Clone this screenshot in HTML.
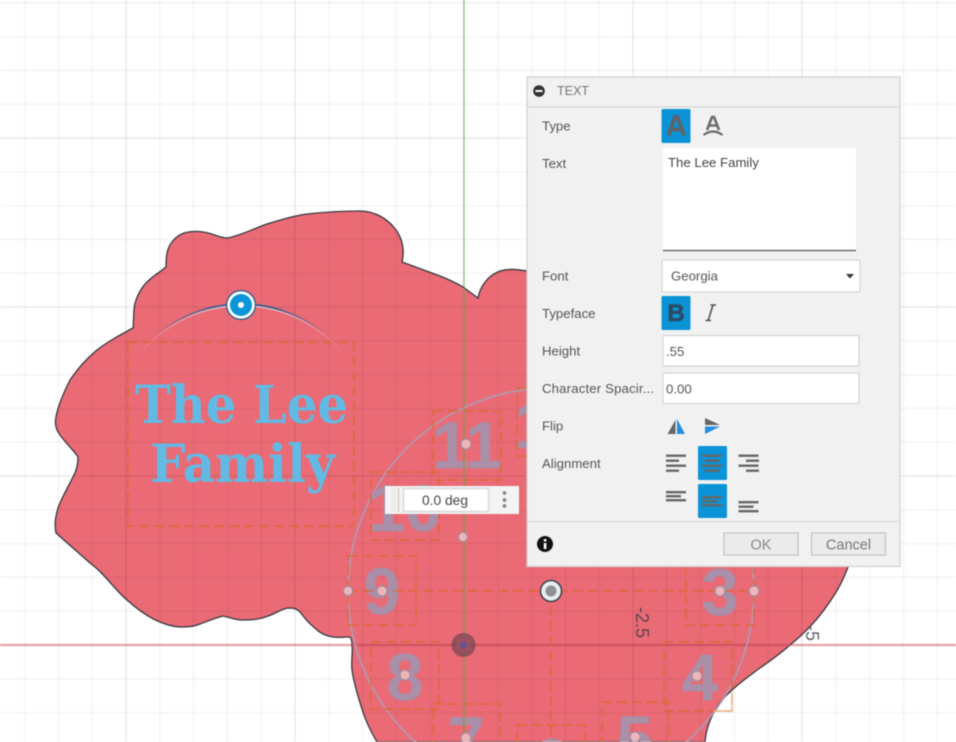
<!DOCTYPE html>
<html><head><meta charset="utf-8"><style>
html,body{margin:0;padding:0;background:#fff;width:956px;height:742px;overflow:hidden}
#r{position:relative;width:956px;height:742px;overflow:hidden;background:#fff}
svg{position:absolute;left:0;top:0;filter:blur(.5px);overflow:hidden}
text{font-family:"Liberation Sans",sans-serif}
.l{font-size:13.2px;fill:#555}
</style></head><body><div id="r">
<svg width="956" height="742" viewBox="0 0 956 742">
<defs>
<pattern id="g1" patternUnits="userSpaceOnUse" x="463.2" y="644.2" width="33.8" height="33.8"><rect width="1.6" height="33.8" fill="#000" fill-opacity=".04"/><rect width="33.8" height="1.6" fill="#000" fill-opacity=".04"/></pattern>
<pattern id="g2" patternUnits="userSpaceOnUse" x="463" y="644" width="169" height="169"><rect width="2" height="169" fill="#000" fill-opacity=".03"/><rect width="169" height="2" fill="#000" fill-opacity=".03"/></pattern>
<linearGradient id="arc" gradientUnits="userSpaceOnUse" x1="136" x2="347" y1="0" y2="0"><stop offset="0" stop-color="#fff" stop-opacity="0"/><stop offset=".5" stop-color="#efcfd8"/><stop offset="1" stop-color="#fff" stop-opacity="0"/></linearGradient>
<linearGradient id="arc2" gradientUnits="userSpaceOnUse" x1="136" x2="347" y1="0" y2="0"><stop offset=".08" stop-color="#17598c" stop-opacity="0"/><stop offset=".35" stop-color="#17598c" stop-opacity=".8"/><stop offset=".65" stop-color="#17598c" stop-opacity=".8"/><stop offset=".92" stop-color="#17598c" stop-opacity="0"/></linearGradient>
</defs>
<rect x="0" y="643.800" width="956" height="2.400" fill="#f5b0b5"/>
<rect x="463" y="0" width="1.800" height="300" fill="#a8e4a8"/>
<path fill="#ea6a75" stroke="#333a40" stroke-width="1.300" d="M360 211C375 211 388 219 396 230C402 238 405 250 402 262L440 276C450 280 458 284 463 287L478 298C480 287 487 276 500 271C510 268 520 270 527 271L848 567C844 578 838 590 831 600C820 617 805 633 790 645C780 654 770 661 760 668C749 676 738 684 730 692C723 698 720 702 717 707C710 718 706 730 705 742L377 742C370 730 366 722 363 712C358 697 354 684 352 670C351 660 353 652 352 646C352 640 351 637 349 637C344 637 338 638 333 637C326 636 320 633 316 629C308 623 304 617 300 612C296 608 292 608 288 608C281 609 275 614 268 616C258 620 250 620 240 620C233 619 228 617 223 616C215 618 208 621 200 624C193 627 186 627 180 627C165 626 148 619 127 600C115 590 105 574 90 563L56 533C54 523 56 515 58 508C62 497 68 487 73 477C77 470 78 463 78 457C72 448 62 440 57 430C55 425 55 421 56 417C58 405 64 392 70 380C78 368 86 359 97 350C107 342 120 335 133 328C134 320 133 312 135 303C138 293 142 287 147 282C153 276 160 272 166 267C166 262 166 258 167 253C169 243 176 236 184 233C191 231 197 231 203 232C212 233 220 238 227 238C240 236 255 228 267 224C280 220 293 216 307 214C325 212 342 211 360 211Z"/>
<rect x="352" y="643.800" width="438" height="2.400" fill="#dc5a66"/>
<rect width="956" height="742" fill="url(#g1)"/>
<rect width="956" height="742" fill="url(#g2)"/>
<rect x="0" y="2" width="956" height="1.500" fill="#000" fill-opacity=".025"/>

<circle cx="551" cy="591" r="203" fill="none" stroke="#b09bb5" stroke-width="2" stroke-opacity=".85"/>
<g fill="#a98fa8" stroke="#a98fa8" stroke-width=".5" font-size="66" text-anchor="middle">
<text x="467" y="468" font-weight="700">11</text>
<text x="405" y="531" font-weight="700">10</text>
<text x="382" y="614" font-weight="700">9</text>
<text x="405" y="700" font-weight="700">8</text>
<text x="466" y="763" font-weight="700">7</text>
<text x="551" y="785" font-weight="700">6</text>
<text x="635" y="762" font-weight="700">5</text>
<text x="700" y="700" font-weight="700">4</text>
<text x="720" y="615" font-weight="700">3</text>
<text x="551" y="448" font-weight="700">12</text>
</g>
<g fill="none" stroke="#d9682e" stroke-width="1.500" stroke-dasharray="10 5" stroke-opacity=".85">
<rect x="128" y="342" width="226" height="184"/>
<rect x="433" y="411" width="68" height="69"/>
<rect x="517" y="388" width="68" height="68"/>
<rect x="371" y="472" width="68" height="68"/>
<rect x="348" y="556" width="68" height="69"/>
<rect x="371" y="642" width="68" height="67"/>
<rect x="433" y="704" width="67" height="68"/>
<rect x="517" y="725" width="68" height="68"/>
<rect x="602" y="702" width="67" height="68"/>
<rect x="664" y="642" width="68" height="69"/>
<rect x="686" y="557" width="68" height="68"/>
<path d="M348 591H754M551 591V742"/>
</g>
<path d="M732 692V711H714" fill="none" stroke="#eeb98f" stroke-width="1.500"/>
<rect x="463" y="288" width="1.800" height="454" fill="#9a8f58"/>
<g fill="#eeb6bb" stroke="#a4909f" stroke-width="1.300">
<circle cx="466" cy="444" r="5"/><circle cx="463" cy="537" r="4.600"/><circle cx="382" cy="591" r="5"/><circle cx="348" cy="591" r="4.600"/><circle cx="405" cy="675" r="5"/><circle cx="466" cy="738" r="5"/><circle cx="635" cy="737" r="5"/><circle cx="697" cy="676" r="5"/><circle cx="720" cy="591" r="5"/><circle cx="754" cy="591" r="5"/>
</g>
<circle cx="463.500" cy="645" r="12" fill="#5b3f4c" fill-opacity=".6"/><circle cx="463.500" cy="645" r="7" fill="#a0505c"/><circle cx="463.500" cy="645" r="4" fill="#6b5585"/>
<circle cx="551" cy="591" r="10.500" fill="#e6eef0" stroke="#3c4148" stroke-width="1.500"/><circle cx="551" cy="591" r="5.500" fill="#8f9092"/>

<path d="M136 357A132 132 0 0 1 347 357" fill="none" stroke="url(#arc2)" stroke-width="2.200"/>
<path d="M136 358.400A132 132 0 0 1 347 358.400" fill="none" stroke="url(#arc)" stroke-width="1.400"/>
<circle cx="241" cy="305" r="15" fill="#17598c"/><circle cx="241" cy="305" r="13.800" fill="#fff"/><circle cx="241" cy="305" r="11" fill="#0a96d8"/><circle cx="241" cy="305" r="3" fill="#fff"/>

<text x="135" y="423" textLength="213" lengthAdjust="spacingAndGlyphs" font-size="52" font-weight="700" fill="#62bae4" style="font-family:'DejaVu Serif',serif">The Lee</text>
<text x="150" y="482" textLength="185" lengthAdjust="spacingAndGlyphs" font-size="52" font-weight="700" fill="#62bae4" style="font-family:'DejaVu Serif',serif">Family</text>

<text transform="translate(636,607) rotate(90)" font-size="18" fill="#5a4650">-2.5</text>
<text transform="translate(806,625) rotate(90)" font-size="18" fill="#666">-5</text>

<rect x="385" y="486" width="134" height="28" fill="#f3f3f3"/>
<path d="M392 488V512M395 488V512" stroke="#ddd" stroke-width="1"/><path d="M398.500 488V512" stroke="#ccc" stroke-width="1.200"/>
<rect x="403.500" y="488.500" width="85" height="23" fill="#fff" stroke="#d4d4d4" stroke-width="1.300"/>
<text x="445" y="505" font-size="13.800" text-anchor="middle" fill="#444">0.0 deg</text>
<g fill="#888"><circle cx="504.500" cy="493" r="1.900"/><circle cx="504.500" cy="500" r="1.900"/><circle cx="504.500" cy="506" r="1.900"/></g>

<rect x="527" y="77" width="373" height="489.500" fill="#f1f1f1" stroke="#cfcfcf" stroke-width="1.200"/>
<path d="M527 107H900M527 521.500H900" stroke="#d6d6d6" stroke-width="1.200"/>
<circle cx="539" cy="91" r="5.800" fill="#333"/><rect x="535.500" y="90" width="7" height="2" fill="#fff"/>
<text x="557" y="95" font-size="12.500" fill="#777">TEXT</text>
<text class="l" x="542" y="130.500">Type</text>
<text class="l" x="542" y="168">Text</text>
<text class="l" x="542" y="280.500">Font</text>
<text class="l" x="542" y="318">Typeface</text>
<text class="l" x="542" y="355.500">Height</text>
<text class="l" x="542" y="393" textLength="112">Character Spacir...</text>
<text class="l" x="542" y="430.500">Flip</text>
<text class="l" x="542" y="468">Alignment</text>

<rect x="661.500" y="109" width="29" height="34" rx="1.500" fill="#0a93d6"/>
<path d="M668.500 135.500L675 117H677.500L684 135.500M671 129.500H681.500" fill="none" stroke="#606367" stroke-width="3.800"/>
<path d="M707 130L712 117H714L719 130M709 125.500H717" fill="none" stroke="#6a6a6a" stroke-width="2.600"/>
<path d="M703.500 135Q713 128 722.500 135" fill="none" stroke="#6a6a6a" stroke-width="2.200"/>

<rect x="663" y="148" width="193" height="102" fill="#fff"/>
<path d="M663 250.500H856" stroke="#555" stroke-width="1.200"/>
<text x="668" y="167" font-size="13.200" fill="#444">The Lee Family</text>

<rect x="662" y="260" width="198" height="32" rx="1" fill="#fff" stroke="#dcdcdc" stroke-width="1.500"/>
<text x="671" y="280.500" font-size="13.200" fill="#555">Georgia</text>
<path d="M846 274H854L850 278.500Z" fill="#333"/>

<rect x="661.500" y="296" width="29" height="34" rx="1.500" fill="#0a93d6"/>
<text x="676" y="321" font-size="24" font-weight="700" text-anchor="middle" fill="#2c4a63" stroke="#2c4a63" stroke-width=".6">B</text>
<path d="M708 321L713 305M705.500 320.500H711M710.500 305H716" fill="none" stroke="#555" stroke-width="1.600"/>

<rect x="663" y="335.500" width="196" height="30.500" fill="#fff" stroke="#d6d6d6" stroke-width="1.300"/>
<text x="666" y="356" font-size="13.200" fill="#555">.55</text>
<rect x="663" y="373" width="196" height="30.500" fill="#fff" stroke="#d6d6d6" stroke-width="1.300"/>
<text x="666" y="393.500" font-size="13.200" fill="#555">0.00</text>

<path d="M676 419L667.500 434H675.500V419Z" fill="#666"/><path d="M677 419L685 434H677Z" fill="#1f8fe0"/>
<path d="M705 418L720 425H705Z" fill="#666"/><path d="M705 426.500H720L705 434Z" fill="#1f8fe0"/>

<rect x="698" y="446" width="29" height="34" rx="1.500" fill="#0a93d6"/>
<rect x="698" y="484" width="29" height="34" rx="1.500" fill="#0a93d6"/>
<g fill="#666">
<rect x="666" y="454.500" width="20" height="2.400"/><rect x="666" y="459.500" width="13" height="2.400"/><rect x="666" y="464.500" width="20" height="2.400"/><rect x="666" y="469.500" width="13" height="2.400"/>
<rect x="702" y="454.500" width="20" height="2.400"/><rect x="705" y="459.500" width="14" height="2.400"/><rect x="702" y="464.500" width="20" height="2.400"/><rect x="705" y="469.500" width="14" height="2.400"/>
<rect x="738.500" y="454.500" width="20" height="2.400"/><rect x="746" y="459.500" width="13" height="2.400"/><rect x="738.500" y="464.500" width="20" height="2.400"/><rect x="746" y="469.500" width="13" height="2.400"/>
<rect x="666" y="491" width="20" height="2.400"/><rect x="666" y="495" width="15" height="2.400"/><rect x="666" y="499" width="20" height="2.400"/>
<rect x="702" y="496" width="20" height="2.400"/><rect x="702" y="500" width="15" height="2.400"/><rect x="702" y="504" width="20" height="2.400"/>
<rect x="738.500" y="501" width="20" height="2.400"/><rect x="738.500" y="505.500" width="15" height="2.400"/><rect x="738.500" y="510" width="20" height="2.400"/>
</g>

<circle cx="545" cy="544" r="8" fill="#111"/><rect x="543.800" y="543" width="2.600" height="6" fill="#fff"/><rect x="543.800" y="539" width="2.600" height="2.500" fill="#fff"/>
<rect x="724" y="533" width="74" height="22" fill="#ebebeb" stroke="#c4c4c4" stroke-width="1.300"/>
<text x="761" y="549.500" font-size="14.500" text-anchor="middle" fill="#888">OK</text>
<rect x="811.500" y="533" width="74" height="22" fill="#ebebeb" stroke="#c4c4c4" stroke-width="1.300"/>
<text x="848.500" y="549.500" font-size="14.500" text-anchor="middle" fill="#777">Cancel</text>
</svg>
</div></body></html>
